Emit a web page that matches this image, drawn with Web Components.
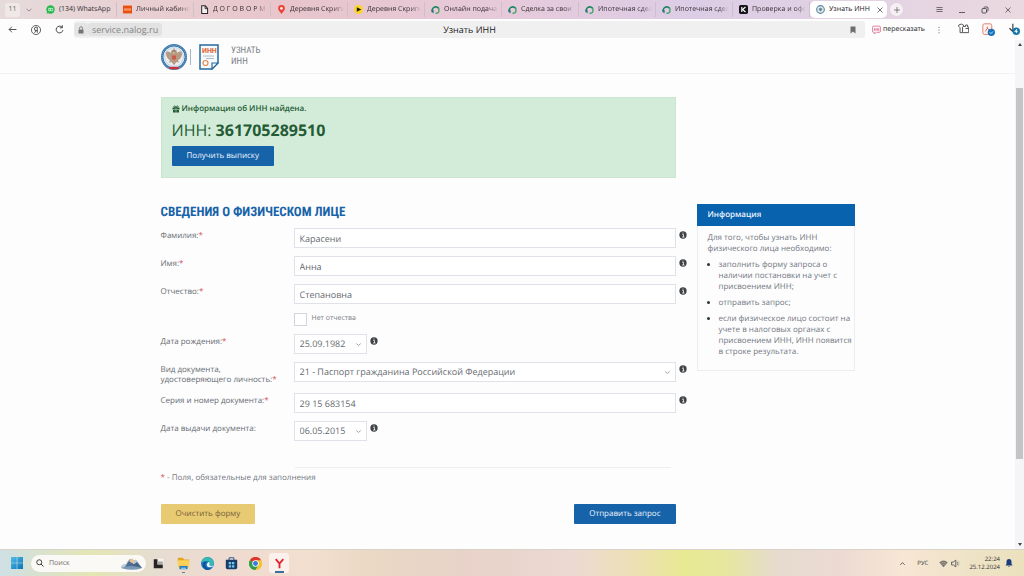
<!DOCTYPE html>
<html lang="ru">
<head>
<meta charset="utf-8">
<title>Узнать ИНН</title>
<style>
html, body { margin: 0; }
body { font-family: "Open Sans", "Noto Sans", sans-serif; font-size: 8px; line-height: 10px; color: #60666c; background: #fdfdfe; text-rendering: geometricPrecision; }
</style>
</head>
<body>
<inn-app></inn-app>
<script>
const define = (name, html, setup) => customElements.define(name, class extends HTMLElement {
  constructor() {
    super();
    this.attachShadow({ mode: "open" }).innerHTML = `<style>*{box-sizing:border-box}button,input,select{font:inherit;color:inherit;margin:0;text-rendering:inherit}button{border:0;background:none;padding:0}svg{display:block;flex:none}</style>` + html;
  }
  connectedCallback() { if (setup && !this.ready) { this.ready = true; setup(this, this.shadowRoot); } }
});

const emblem = `<circle cx="16" cy="16" r="14.5" fill="#f4f6f8" stroke="#3978ad" stroke-width="3"/><circle cx="16" cy="16" r="14.5" fill="none" stroke="#a9c6df" stroke-width="1" stroke-dasharray="1 1.6"/><circle cx="16" cy="16" r="11.6" fill="#e9eef2" stroke="#8fb0cc" stroke-width=".6"/><path d="M16 12c-1-3-4-3-4-1-3-3-5-2-6 0 0 4 2 7 5 9l-1 3 3-1 3 4 3-4 3 1-1-3c3-2 5-5 5-9-1-2-3-3-6 0 0-2-3-2-4 1z" fill="#b79a83"/><path d="M13 7l1.500 1L16 5l1.500 3L19 7v3h-6z" fill="#a58470"/><path d="M13.500 14h5v4l-2.500 2-2.500-2z" fill="#c95a4c"/><path d="M10 28h12v3H10z" fill="#c8323e"/>`;

const icons = {
  wa: `<circle cx="8" cy="8" r="7.500" fill="#27b94e"/><path d="M1 15l1.500-5 4 4z" fill="#27b94e"/><path d="M4 6h8M4 10h8M5 6v4M8 6v4M12 6v4" stroke="#c9f2d2" stroke-width="1.500" fill="none"/>`,
  orange: `<path d="M0 1h16v14H0z" fill="#e9500d"/><path d="M3 6v4M5 6v4M7 6v4M9 6v4M11 6v4M13 6v4" stroke="#ffd2b8" stroke-width="1.200"/>`,
  doc: `<path d="M3 1.500h6.500L13.500 6v9H3z" fill="#f6eeee" stroke="#29262a" stroke-width="1.800"/><path d="M9 1.500V6.500h4.500" fill="none" stroke="#29262a" stroke-width="1.600"/>`,
  pin: `<path d="M8 16C5 11 2 9.500 2 6a6 6 0 0 1 12 0c0 3.500-3 5-6 10z" fill="#eb4034"/><circle cx="8" cy="6" r="2.400" fill="#fbeaea"/>`,
  play: `<circle cx="8" cy="8" r="8" fill="#fbd52b"/><path d="M5 4l8 4-8 4z" fill="#1d1b13"/>`,
  dom: `<path d="M3 13A6.200 6.200 0 1 1 14 6.500" fill="none" stroke="#17855a" stroke-width="3"/><path d="M14 6v5a3.500 3.500 0 0 1-3.500 3.500H8" fill="none" stroke="#4aa56a" stroke-width="2.600"/><path d="M0 9.500l4.500-1V15z" fill="#2c6f86"/>`,
  k: `<rect width="16" height="16" rx="3" fill="#17131a"/><path d="M5 3.500v9M11.500 3.500L6.500 8l5 4.500" stroke="#fff" stroke-width="2" fill="none"/>`,
  fns: `<circle cx="8" cy="8" r="6.800" fill="#dce6ea" stroke="#5b87a1" stroke-width="2"/><circle cx="8" cy="8" r="4" fill="#9eb3b7" stroke="#fff"/><path d="M5 7l3-2 3 2-3 4z" fill="#6d8790"/>`,
  close: `<path d="M3 3l10 10M13 3L3 13" stroke="#444" stroke-width="1.500"/>`,
  plus: `<path d="M8 2v12M2 8h12" stroke="#555" stroke-width="1.400"/>`,
  menu: `<path d="M1 3.500h14M1 8h14M1 12.500h14" stroke="#333" stroke-width="1.500"/>`,
  min: `<path d="M2 13h12" stroke="#333" stroke-width="1.500"/>`,
  restore: `<rect x="2" y="5" width="9" height="9" rx="2" fill="none" stroke="#333" stroke-width="1.600"/><path d="M5.500 3q.5-1 2-1H12q2 0 2 2v5q0 1.500-1 2" fill="none" stroke="#333" stroke-width="1.600"/>`,
  back: `<path d="M15 8H2M7 3L2 8l5 5" fill="none" stroke="#333" stroke-width="1.500"/>`,
  ya: `<circle cx="8" cy="8" r="7.300" fill="none" stroke="#333" stroke-width="1.200"/><path d="M10 12.500v-9H8q-2.500 0-2.500 2.700T8 9h2M8 9l-2.500 3.500" fill="none" stroke="#333" stroke-width="1.300"/>`,
  reload: `<path d="M12.500 4A6 6 0 1 0 14 9" fill="none" stroke="#333" stroke-width="1.600"/><path d="M13 .5V5H8.500" fill="none" stroke="#333" stroke-width="1.600"/>`,
  lock: `<rect x="3" y="7" width="10" height="8" rx="1" fill="#747474"/><path d="M5 7V4.500a3 3 0 0 1 6 0V7" fill="none" stroke="#747474" stroke-width="1.700"/>`,
  mark: `<path d="M3 1h10v14l-5-4-5 4z" fill="#6c6c6c"/>`,
  quote: `<path d="M3 2h10q2 0 2 2v7q0 2-2 2H8l-4 3v-3H3q-2 0-2-2V4q0-2 2-2z" fill="#fff5f8" stroke="#cf517e" stroke-width="1.200"/><path d="M4.500 6v4M7 6v4M9.500 6v4M12 6v4" stroke="#d04475" stroke-width="1.300"/>`,
  dots: `<circle cx="8" cy="2.500" r="1.200" fill="#555"/><circle cx="8" cy="8" r="1.200" fill="#555"/><circle cx="8" cy="13.500" r="1.200" fill="#555"/>`,
  ext: `<path d="M1 3q4-3 7 0v2L6.500 6v8H3V7L1 5z" fill="none" stroke="#444" stroke-width="1.300"/><path d="M8 5h3V3h3v3h1.500v8H7M11 8h4" fill="none" stroke="#444" stroke-width="1.300"/>`,
  acro: `<rect x="1" y="1" width="11" height="13" rx="2" fill="#fff4f1" stroke="#da8275" stroke-width="1.200"/><path d="M4 10.500Q7.500 6 6.500 4.500M6.500 6q1 3 4 3" fill="none" stroke="#c8443b" stroke-width=".9"/><circle cx="11.500" cy="11.500" r="4.500" fill="#1673bb"/><path d="M9.500 11.500l1.500 1.500 2.500-2.500" fill="none" stroke="#fff"/>`,
  down: `<path d="M6.500 1v10M2 7l4.500 4.500" stroke="#333" stroke-width="1.500" fill="none"/><circle cx="11" cy="11" r="5" fill="#1677a9"/><path d="M11.500 13.500V8.500L9 11.500h4" fill="none" stroke="#fff" stroke-width="1.100"/>`,
  chev: `<path d="M3 6l5 4 5-4" fill="none" stroke="#8a8a92" stroke-width="1.800"/>`,
  up: `<path d="M3 11l5-5 5 5" fill="none" stroke="#333" stroke-width="1.700"/>`,
  gift: `<path d="M1 5h14v4H1zM2 10h12v5H2z" fill="#245b35"/><path d="M8 5C5 5 3.500 4 4 2.500S7 1.500 8 5c1-3.500 3.500-4 4-2.500S11 5 8 5z" fill="none" stroke="#245b35" stroke-width="1.800"/><path d="M8 5v10" stroke="#d2edda" stroke-width="1"/>`,
  info: `<circle cx="8" cy="8" r="7.300" fill="#3f4346"/><path d="M6.500 7H9v5M6 12h5" stroke="#fff" stroke-width="1.500" fill="none"/><circle cx="8" cy="4" r="1.200" fill="#fff"/>`,
  win: `<defs><linearGradient id="w" x2="1" y2="1"><stop stop-color="#52bde8"/><stop offset="1" stop-color="#0873b9"/></linearGradient></defs><path d="M0 0h7.600v7.600H0zM8.400 0H16v7.600H8.400zM0 8.400h7.600V16H0zM8.400 8.400H16V16H8.400z" fill="url(#w)"/>`,
  search: `<circle cx="6.500" cy="6.500" r="5" fill="none" stroke="#333" stroke-width="1.800"/><path d="M10 10l5 5" stroke="#333" stroke-width="2"/>`,
  task: `<path d="M5 1h10v9H5z" fill="#f4efe9" stroke="#c9c3bd" stroke-width=".5"/><path d="M1 3h5v7h7v5H1z" fill="#282426"/><path d="M6 6h7v4H6z" fill="#aaa5a3"/>`,
  folder: `<path d="M1 1h6l2 2h6v4H1z" fill="#e4a51f"/><path d="M1 4h14v9H1z" fill="#fbd158"/><path d="M3 11h10v4H3z" fill="#2a7ab8"/><path d="M5 13h6v2H5z" fill="#83c4e8"/>`,
  edge: `<circle cx="8" cy="8" r="8" fill="#1679bf"/><path d="M.5 7C1.500-2 15-2 16 7c0 4-5 4-6 2 1-2 0-4-3-4S1 7 .5 7z" fill="#36b9b3"/><path d="M7 6c-3 2-2 8 4 8l3-1c-2 2-4 3-7 2.800C3 15 1 10 3 7q2-2 4-1z" fill="#0d539b"/><path d="M9 6q3 1 1 3.500Q11 12 15.500 10L14 12Q7 14 7 9z" fill="#e8f3f8"/>`,
  store: `<path d="M5 4V2q0-1 1-1h4q1 0 1 1v2" fill="none" stroke="#2c5f8e" stroke-width="1.300"/><path d="M1 3.500h14V13q0 2-2 2H3q-2 0-2-2z" fill="#183c66"/><path d="M4.500 6h3v3h-3zM8.500 6h3v3h-3zM4.500 10h3v3h-3zM8.500 10h3v3h-3z" fill="#6fc5ed"/>`,
  chrome: `<circle cx="8" cy="8" r="8" fill="#f3c334"/><path d="M8 8L1 4A8 8 0 0 1 15 4z" fill="#d9372e"/><path d="M8 8L1 4A8 8 0 0 0 8 16l3.500-6z" fill="#2f9c50"/><path d="M8 4h7A8 8 0 0 1 8 16l3.500-6z" fill="#f3c334"/><circle cx="8" cy="8" r="3.900" fill="#fff"/><circle cx="8" cy="8" r="3" fill="#3979db"/>`,
  yb: `<path d="M2.500 1.500L8 8l5.500-6.500M8 8v7" fill="none" stroke="#e0242d" stroke-width="2.700"/>`,
  wifi: `<path d="M.5 6Q8-1 15.500 6L8 14.500z" fill="#77736a"/><path d="M2.500 8Q8 3 13.500 8M5 10.500q3-2.500 6 0" fill="none" stroke="#ddd6c5" stroke-width=".8"/>`,
  sound: `<path d="M1 5.500h3L8.500 2v12L4 10.500H1z" fill="none" stroke="#444" stroke-width="1.400"/><path d="M11 5q2 3 0 6" fill="none" stroke="#555" stroke-width="1.200"/><path d="M13 3q3 5 0 10" fill="none" stroke="#aaa" stroke-width="1"/>`,
  bell: `<path d="M8 0q5 0 5 6v4l2 3H1l2-3V6q0-6 5-6z" fill="#1a3d7c"/><path d="M6 14h4q-2 3-4 0z" fill="#1a3d7c"/>`
};

define("ui-icon", `<style>:host{display:block;flex:none}svg{width:100%;height:100%}</style><svg viewBox="0 0 16 16" aria-hidden="true"></svg>`, (el, r) => {
  const s = (el.getAttribute("size") || 8) + "px";
  el.style.width = s; el.style.height = s;
  r.querySelector("svg").innerHTML = icons[el.getAttribute("name")];
});

define("browser-tab", `<style>
:host{display:block;flex:1;min-width:0;height:19px}
button{display:flex;align-items:center;width:100%;height:15px;margin-top:2px;padding:0 3px 0 6px;gap:4px;font-size:7px;color:#373035;text-align:left;border-right:1px solid #cfbfc8}
span{flex:1;min-width:0;overflow:hidden;white-space:nowrap;mask-image:linear-gradient(90deg,#000 80%,transparent)}
:host([whole]) span{mask-image:none}
:host([active]) button{height:17px;margin-top:1px;background:#fff;border-radius:5px;border:0;color:#222}
:host(:not([active])) .x{display:none}
</style><button type="button"><slot name="icon"></slot><span><slot></slot></span><ui-icon class="x" name="close" size="8"></ui-icon></button>`);

define("tab-strip", `<style>
:host{display:flex;height:19px;align-items:center;background:linear-gradient(90deg,#e6dbdb 0,#e8cfd2 14%,#e8c5cb 28%,#e6cadb 50%,#dccde6 68%,#e3d2e3 85%,#ead9df)}
.group{width:40px;display:flex;align-items:center;gap:5px;padding-left:5px;font-size:7px;color:#666}
.group b{font-weight:400;width:15px;height:14px;line-height:14px;text-align:center;border-radius:3px;background:#f0e7e7}
.tabs{flex:1;display:flex;min-width:0}
.end{width:137px;display:flex;align-items:center;gap:15px;padding-left:3px}
.plus{width:13px;height:13px;border-radius:7px;background:#f6eff4;display:flex;align-items:center;justify-content:center;margin-right:18px}
</style>
<div class="group"><b>11</b><ui-icon name="chev"></ui-icon></div><nav class="tabs"></nav>
<div class="end"><button class="plus" aria-label="Новая вкладка"><ui-icon name="plus"></ui-icon></button><ui-icon name="menu" size="7"></ui-icon><ui-icon name="min"></ui-icon><ui-icon name="restore"></ui-icon><ui-icon name="close"></ui-icon></div>`, (el, r) => {
  r.querySelector(".tabs").innerHTML = [["wa","(134) WhatsApp"],["orange","Личный кабинет"],["doc","Д О Г О В О Р М"],["pin","Деревня Скрипицы"],["play","Деревня Скрипицы"],["dom","Онлайн подача"],["dom","Сделка за свои"],["dom","Ипотечная сделка"],["dom","Ипотечная сделка"],["k","Проверка и оформ"],["fns","Узнать ИНН"]]
    .map(([i, t], n) => `<browser-tab ${n === 10 ? "active whole" : n ? "" : "whole"}><ui-icon slot="icon" name="${i}" size="9"></ui-icon>${t}</browser-tab>`).join("");
});

define("address-bar", `<style>
:host{display:flex;align-items:center;height:21px;padding:0 4px 0 8px;background:#fdfdfe;color:#222}
.nav{display:flex;gap:14px;width:66px}
.field{flex:1;display:grid;grid-template-columns:1fr auto 1fr;align-items:center;height:17px;background:#f0f0f1;border-radius:3px;font-size:9px}
.url{display:flex;align-items:center;height:13px;color:#858585}
.url i{width:14px;height:13px;background:#e4e4e5;display:flex;align-items:center;justify-content:center;border-radius:3px}
.url a{color:inherit;text-decoration:none;background:#e2e2e3;padding:0 4px;line-height:13px;border-radius:3px}
.field > ui-icon{justify-self:end;margin-right:8px}
.retell{display:flex;align-items:center;gap:2px;margin:0 15px 0 7px;font-size:7px}
.retell ui-icon:last-child{margin-left:8px}
.ext{display:flex;gap:13px}
</style>
<div class="nav"><ui-icon name="back" size="9"></ui-icon><ui-icon name="ya" size="10"></ui-icon><ui-icon name="reload" size="9"></ui-icon></div>
<div class="field"><div class="url"><i><ui-icon name="lock"></ui-icon></i><a href="#">service.nalog.ru</a></div><span>Узнать ИНН</span><ui-icon name="mark" size="8"></ui-icon></div>
<button class="retell"><ui-icon name="quote" size="9"></ui-icon>пересказать<ui-icon name="dots" size="8"></ui-icon></button>
<div class="ext"><ui-icon name="ext" size="11"></ui-icon><ui-icon name="acro" size="13"></ui-icon><ui-icon name="down" size="12"></ui-icon></div>`);

define("site-header", `<style>
:host{display:block;height:34px;border-bottom:1px solid #f2f2f5}
div{display:flex;align-items:center;max-width:693px;height:33px;margin:auto}
.line{width:1px;height:16px;background:#aab4bc;margin:0 8px 0 3px}
a{color:#7b8186;text-decoration:none;font:9px/11px "Roboto Condensed","Liberation Sans Narrow",Roboto,sans-serif;margin-left:12px}
text{font:bold 8px Roboto,sans-serif}
</style><div>
<svg width="26" height="26" viewBox="0 0 32 32" aria-label="ФНС">${emblem}</svg><span class="line"></span>
<svg width="20" height="26" viewBox="0 0 20 26"><path d="M1 1h18v18l-6 6H1z" fill="#f7fafc" stroke="#26699f" stroke-width="1.500"/><path d="M19 19h-6v6z" fill="#fff" stroke="#26699f" stroke-width="1.200"/><text x="3" y="9" fill="#e1642f" style="font-size:7px">ИНН</text><path d="M4 12h11M7 14.500h8" stroke="#9aabb8" stroke-width=".8"/><circle cx="6.500" cy="19" r="2.500" fill="none" stroke="#e5894b" stroke-width="1.200"/></svg>
<a href="#">УЗНАТЬ<br>ИНН</a></div>`);

define("action-button", `<style>
:host{display:inline-block}
button{display:block;height:20px;padding:0 15px;border-radius:1px;background:#1763a9;color:#edf4fb;font-size:8px;line-height:20px;white-space:nowrap}
:host([kind=clear]) button{background:#e8ca72;color:#77633a}
</style><button type="button"><slot></slot></button>`);

define("result-alert", `<style>
:host{display:block;margin-right:11px;padding:6px 10px 11px;background:#d3ecd9;border:1px solid #cbe5d1;color:#245b35}
p{margin:0;display:flex;align-items:center;gap:2px;font-size:8px;font-weight:600;line-height:10px}
h2{margin:6px 0 5px;font-size:16px;line-height:21px;font-weight:400}
</style><p><ui-icon name="gift"></ui-icon>Информация об ИНН найдена.</p><h2>ИНН: <b>361705289510</b></h2><action-button>Получить выписку</action-button>`);

define("form-row", `<style>
:host{display:grid;grid-template-columns:133px 1fr 11px;align-items:start;color:#666b70}
label{padding-top:3px;font-size:8px;line-height:10px}
label span{white-space:pre-line}
em{font-style:normal;color:#d34a54}
.control{position:relative;display:flex}
input,select{display:block;width:100%;height:20px;padding:0 5px;border:1px solid #e0e1e9;border-radius:0;background:#fff;appearance:none;font-size:9px;outline:0}
.arrow{position:absolute;right:5px;top:7px;pointer-events:none}
.info{margin:3px 0 0 3px}
:host([short]){grid-template-columns:133px 73px 1fr}
</style><label for="f"><span></span><em>*</em></label><div class="control"></div><ui-icon class="info" name="info"></ui-icon>`, (el, r) => {
  const a = n => el.getAttribute(n);
  r.querySelector("span").textContent = a("label").replace("|", "\n");
  if (el.hasAttribute("optional")) r.querySelector("em").remove();
  r.querySelector(".control").innerHTML = el.hasAttribute("select")
    ? `<select id="f"><option>${a("value")}</option></select><ui-icon class="arrow" name="chev" size="7"></ui-icon>`
    : `<input id="f" type="text" value="${a("value")}">`;
});

define("check-row", `<style>
:host{display:flex;align-items:center;height:14px;padding-left:133px}
label{display:flex;align-items:center;gap:5px;font-size:7px;color:#777b80}
input{appearance:none;width:13px;height:13px;border:1px solid #d3d5de;background:#fff}
</style><label><input type="checkbox"><slot></slot></label>`);

define("inn-form", `<style>
:host{display:block}
h1{margin:27px 0 8px;color:#1763a9;font:bold 13px/15px "Roboto Condensed","Liberation Sans Narrow",Roboto,sans-serif}
form{display:flex;flex-direction:column;gap:8px}
hr{width:376px;height:1px;border:0;margin:26px 0 4px 134px;background:#eeeef3}
p{margin:0;font-size:8px;line-height:12px;color:#747980}p em{font-style:normal;color:#d34a54}
footer{display:flex;justify-content:space-between;margin:20px 11px 0 0}
</style><h1>СВЕДЕНИЯ О ФИЗИЧЕСКОМ ЛИЦЕ</h1>
<form>
<form-row label="Фамилия:" value="Карасени"></form-row>
<form-row label="Имя:" value="Анна"></form-row>
<form-row label="Отчество:" value="Степановна"></form-row>
<check-row>Нет отчества</check-row>
<form-row short select label="Дата рождения:" value="25.09.1982"></form-row>
<form-row select label="Вид документа,|удостоверяющего личность:" value="21 - Паспорт гражданина Российской Федерации"></form-row>
<form-row label="Серия и номер документа:" value="29 15 683154"></form-row>
<form-row short select optional label="Дата выдачи документа:" value="06.05.2015"></form-row>
</form>
<hr><p><em>*</em> - Поля, обязательные для заполнения</p>
<footer><action-button kind="clear">Очистить форму</action-button><action-button>Отправить запрос</action-button></footer>`);

define("info-panel", `<style>
:host{display:block;margin-top:107px;border:1px solid #ecedf1;border-top:0;align-self:start;color:#73787e;font-size:8px;line-height:11px}
h3{margin:0 -1px;height:22px;line-height:22px;padding:0 11px;background:#0862ae;color:#eef5fb;font-size:8px;font-weight:600}
div{padding:6px 0 13px 10px}
p{margin:0 16px 0 0}ul{margin:5px 0 0;padding-left:11px}li{margin-bottom:5px}li:last-child{margin:0}li::marker{color:#333}
</style><h3>Информация</h3><div><p>Для того, чтобы узнать ИНН физического лица необходимо:</p><ul><li>заполнить форму запроса о наличии постановки на учет с присвоением ИНН;</li><li>отправить запрос;</li><li>если физическое лицо состоит на учете в налоговых органах с присвоением ИНН, ИНН появится в строке результата.</li></ul></div>`);

define("scroll-rail", `<style>
:host{display:flex;flex-direction:column;align-items:center;background:#f5f5f7;padding:3px 0}
i{width:0;height:0;border:2px solid transparent}
.u{border-bottom:3px solid #444;border-top:0}.d{border-top:3px solid #444;border-bottom:0}
.t{flex:1;width:7px;display:flex;flex-direction:column}
.t::before{content:"";flex:42}.t b{flex:371;background:#c4c4c7}.t::after{content:"";flex:84}
</style><i class="u"></i><div class="t"><b></b></div><i class="d"></i>`);

define("task-bar", `<style>
:host{display:flex;align-items:center;height:27px;padding:0 11px 0 11px;border-top:1px solid #d9d4ca;color:#333;background:linear-gradient(90deg,#cfdfe4 0,#dbe3c8 5%,#e4e6b4 9%,#e6ddd0 15%,#efdad0 22%,#f3dfcf 30%,#e9d8c4 37%,#e8d2c9 46%,#ecd9d2 56%,#ede0b4 62%,#e8ea92 67%,#e6e6a0 71%,#e6dbcf 76%,#ecdad2 82%,#f7e6d4 88%,#efe3c8 94%,#ebe1bd)}
.find{display:flex;align-items:center;width:115px;height:17px;margin:0 3px 0 8px;padding:0 3px 0 5px;gap:5px;border-radius:9px;background:#fbf9f5;font-size:7px}
.find input{flex:1;min-width:0;border:0;background:none;padding:0;outline:0;height:12px}.find input::placeholder{color:#6b6b6b;opacity:1}
.apps{display:flex;flex:1;gap:4px}
.apps span{width:20px;height:20px;display:flex;align-items:center;justify-content:center;position:relative;border-radius:3px}
.apps .run::after{content:"";position:absolute;bottom:0;width:3px;height:1px;background:#777}
.apps .on{background:#fbf1ec}.apps .on::after{width:9px;height:2px;background:#3c6fa0}
.tray{display:flex;align-items:center;font-size:6px}
.lang{margin:0 11px}.tray ui-icon+ui-icon{margin-left:3px}
time{text-align:right;font-size:6px;line-height:8px;margin:0 5px 0 9px}
</style><ui-icon name="win" size="12"></ui-icon>
<div class="find"><ui-icon name="search" size="8"></ui-icon><input type="search" placeholder="Поиск" aria-label="Поиск">
<svg width="23" height="13" viewBox="0 0 23 13"><path d="M1 11q0-4 5-4 3-7 8-4 3-1 4 2l4 6q-9 4-21 0z" fill="#bac8d7"/><path d="M5 10l5-8 5 7-6 3z" fill="#4d6e96"/><path d="M9 4l3-3 3 6-3-1z" fill="#edc58a"/><path d="M13 8l4-3 5 6h-9z" fill="#456389"/><path d="M1 11q10-4 21 0-9 3-21 0z" fill="#7c96b5"/></svg></div>
<div class="apps"><span><ui-icon name="task" size="12"></ui-icon></span><span class="run"><ui-icon name="folder" size="13"></ui-icon></span><span><ui-icon name="edge" size="13"></ui-icon></span><span><ui-icon name="store" size="13"></ui-icon></span><span><ui-icon name="chrome" size="13"></ui-icon></span><span class="run on"><ui-icon name="yb" size="11"></ui-icon></span></div>
<div class="tray"><ui-icon name="up" size="7"></ui-icon><span class="lang">РУС</span><ui-icon name="wifi" size="9"></ui-icon><ui-icon name="sound" size="9"></ui-icon><time>22:24<br>25.12.2024</time><ui-icon name="bell" size="8"></ui-icon></div>`);

define("inn-app", `<style>
:host{display:flex;flex-direction:column;min-height:100vh}
.view{flex:1;display:grid;grid-template-columns:1fr 9px}
main{display:grid;grid-template-columns:minmax(0,1fr) 158px;gap:10px;max-width:694px;margin:23px auto 0}
</style><tab-strip></tab-strip><address-bar></address-bar>
<div class="view"><div><site-header></site-header><main><section><result-alert></result-alert><inn-form></inn-form></section><info-panel></info-panel></main></div><scroll-rail></scroll-rail></div><task-bar></task-bar>`);
</script>
</body>
</html>
